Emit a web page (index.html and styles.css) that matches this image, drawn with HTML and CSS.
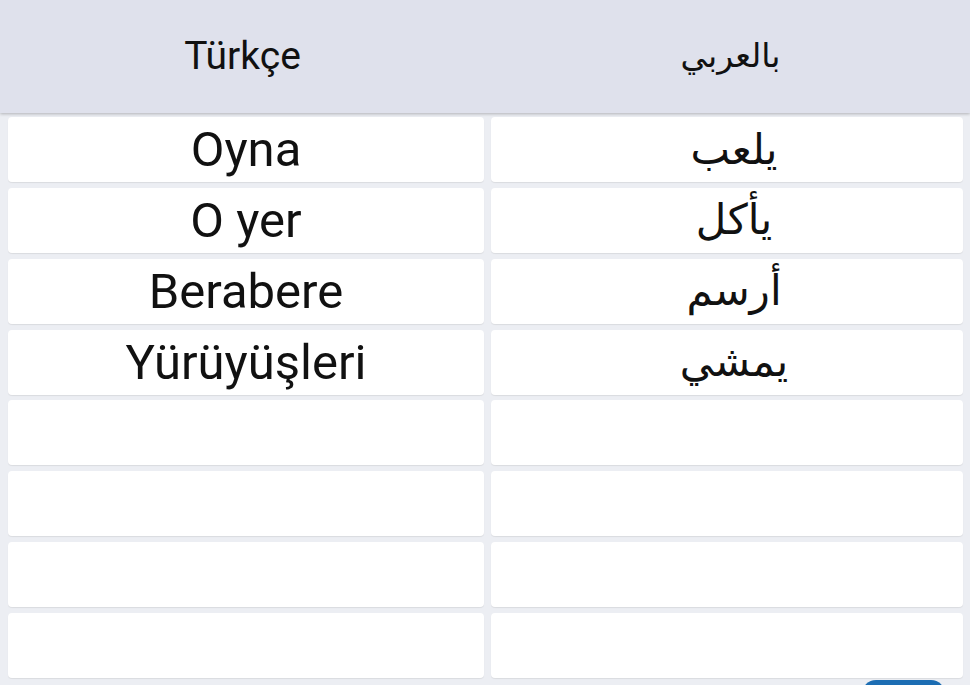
FILE: index.html
```html
<!DOCTYPE html>
<html lang="tr">
<head>
<meta charset="utf-8">
<link rel="stylesheet" href="styles.css">
</head>
<body>
<div class="page">
  <header class="head">
    <div class="head-cell">Türkçe</div>
    <div class="head-cell ar" dir="rtl">بالعربي</div>
  </header>
  <main class="grid">
    <div class="cell">Oyna</div><div class="cell ar" dir="rtl">يلعب</div>
    <div class="cell">O yer</div><div class="cell ar" dir="rtl">يأكل</div>
    <div class="cell">Berabere</div><div class="cell ar" dir="rtl">أرسم</div>
    <div class="cell">Yürüyüşleri</div><div class="cell ar" dir="rtl">يمشي</div>
    <div class="cell"></div><div class="cell"></div>
    <div class="cell"></div><div class="cell"></div>
    <div class="cell"></div><div class="cell"></div>
    <div class="cell"></div><div class="cell"></div>
  </main>
  <div class="fab"></div>
</div>
</body>
</html>
```
FILE: styles.css
```css
html, body {
  margin: 0;
  padding: 0;
  background: #eceef3;
  font-family: Roboto, "Noto Sans", sans-serif;
  color: #111;
}
.page {
  position: relative;
  width: 970px;
  height: 685px;
  overflow: hidden;
}
.head {
  height: 113px;
  background: #dfe1ec;
  display: grid;
  grid-template-columns: 1fr 1fr;
  align-items: center;
  box-shadow: 0 1px 3px rgba(0,0,0,0.25);
  position: relative;
  z-index: 1;
}
.head-cell {
  text-align: center;
  font-size: 39px;
  padding-bottom: 2px;
}
.head-cell.ar {
  font-family: "DejaVu Sans", sans-serif;
  font-size: 33px;
  padding-left: 6px;
}
.grid {
  display: grid;
  grid-template-columns: 476px 472px;
  grid-auto-rows: 65px;
  column-gap: 7px;
  row-gap: 5.86px;
  padding: 4px 7px 0 8px;
}
.cell {
  background: #fff;
  border-radius: 4px;
  box-shadow: 0 1px 1px rgba(0,0,0,0.08);
  display: flex;
  align-items: center;
  justify-content: center;
  font-size: 49px;
  line-height: 1;
}
.cell.ar {
  font-family: "DejaVu Sans", sans-serif;
  font-size: 42px;
  padding-left: 14px;
}
.fab {
  position: absolute;
  left: 862px;
  top: 680px;
  width: 83px;
  height: 40px;
  border-radius: 14px;
  background: #1c6db3;
}
```
